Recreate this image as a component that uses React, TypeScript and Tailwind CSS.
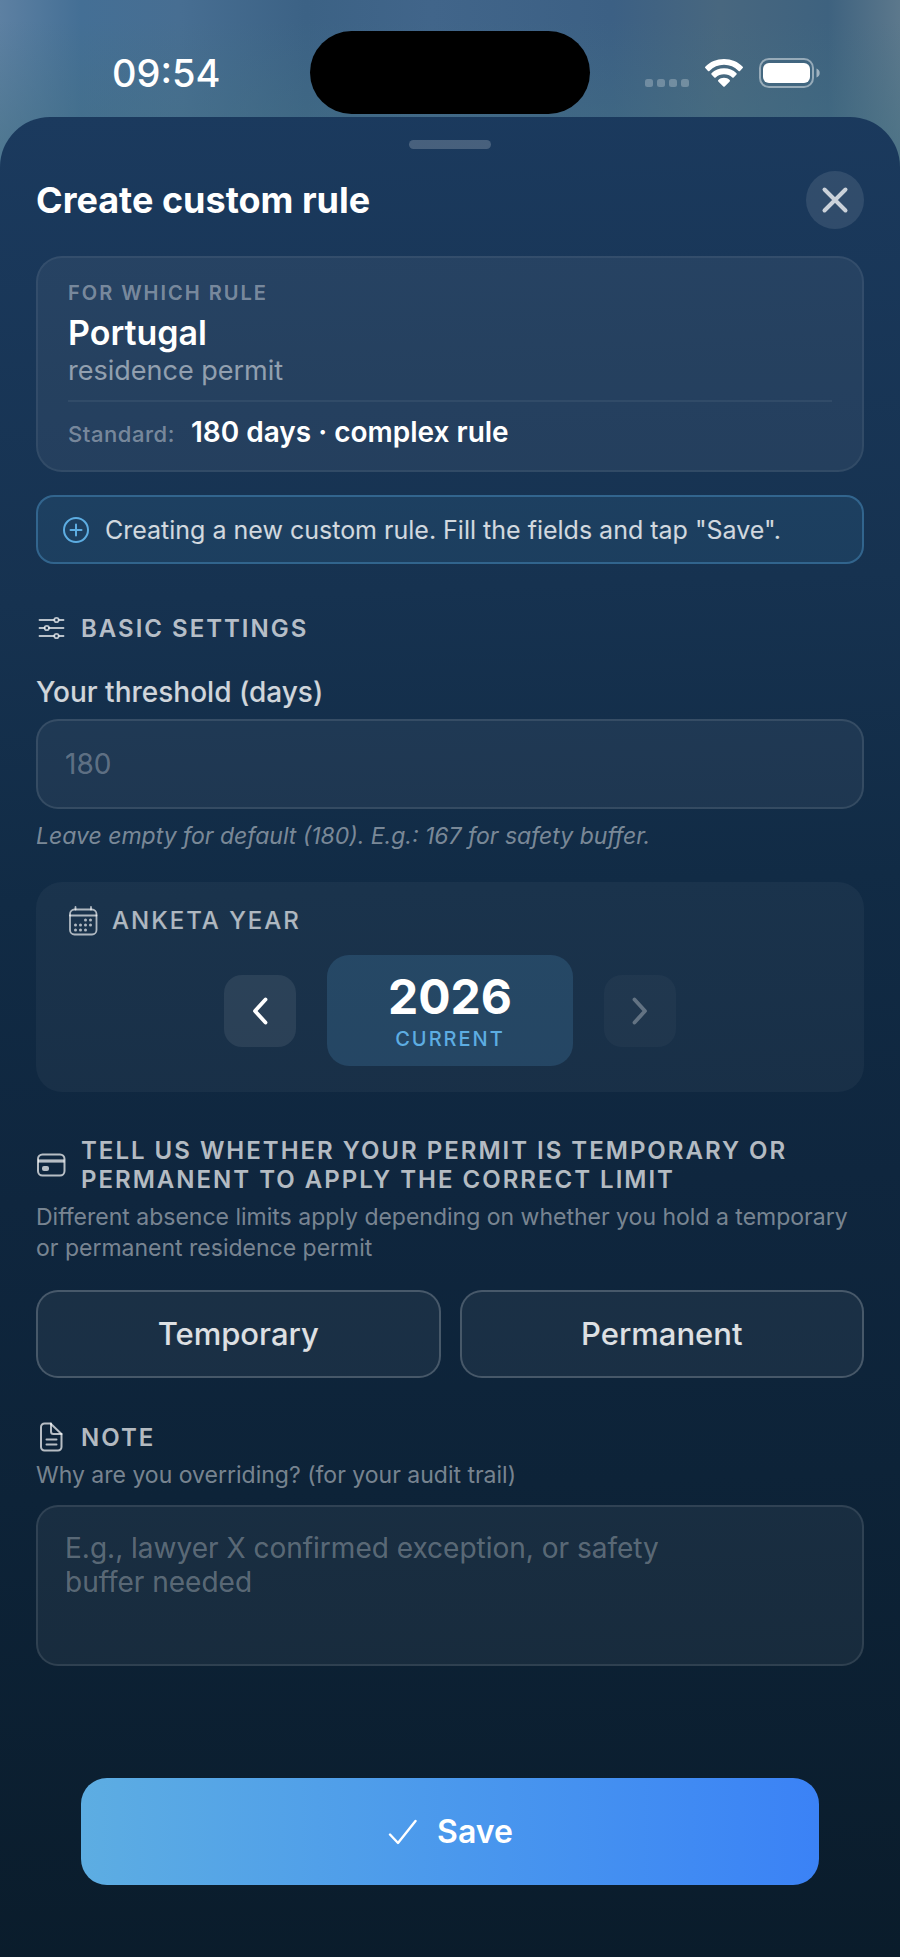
import { useState } from 'react';
import type { ReactNode } from 'react';

const StatusBar = () => (
  <header className="relative flex h-[117px] items-center justify-between pt-7 pr-20 pl-28">
    <span className="text-[38px] leading-10 font-medium">09:54</span>
    <div className="absolute top-[31px] left-1/2 h-[83px] w-[280px] -translate-x-1/2 rounded-full bg-black" />
    <div className="flex items-center gap-4">
      <svg width="44" height="28" viewBox="0 0 44 28" fill="#fff" fillOpacity="0.25">
        <rect x="0" y="20" width="8" height="8" rx="2.5" />
        <rect x="12" y="20" width="8" height="8" rx="2.5" />
        <rect x="24" y="20" width="8" height="8" rx="2.5" />
        <rect x="36" y="20" width="8" height="8" rx="2.5" />
      </svg>
      <svg width="38" height="28" viewBox="0 0 38 28" fill="#fff">
        <path d="M19 0C26.4 0 33 2.8 37.7 7.7c.4.4.4 1 0 1.400l-2.700 2.800c-.4.4-1 .4-1.400 0C29.700 8 24.700 5.800 19 5.800S8.300 8 4.400 11.900c-.4.4-1 .4-1.400 0L.3 9.100c-.4-.4-.4-1 0-1.400C5 2.800 11.600 0 19 0z" />
        <path d="M19 9.300c4.800 0 9.200 1.800 12.500 4.900.4.4.4 1 0 1.400l-2.800 2.800c-.4.4-1 .4-1.400 0-2.200-2-5.100-3.200-8.300-3.200s-6.100 1.200-8.300 3.200c-.4.4-1 .4-1.400 0l-2.800-2.800c-.4-.4-.4-1 0-1.400C9.800 11.100 14.200 9.300 19 9.300z" />
        <path d="M19 18.800c2.200 0 4.200.8 5.700 2.200.4.4.4 1 0 1.400l-5 5c-.4.4-1 .4-1.400 0l-5-5c-.4-.4-.4-1 0-1.400 1.500-1.400 3.500-2.200 5.700-2.200z" />
      </svg>
      <svg width="61" height="30" viewBox="0 0 61 30">
        <rect x="1" y="1" width="53" height="28" rx="9" fill="none" stroke="#fff" strokeOpacity="0.45" strokeWidth="2" />
        <rect x="4" y="5" width="47" height="20" rx="6" fill="#fff" />
        <path d="M57.500 10.500c2 .8 3.200 2.500 3.200 4.500s-1.200 3.700-3.200 4.500z" fill="#fff" fillOpacity="0.5" />
      </svg>
    </div>
  </header>
);

const SlidersIcon = () => (
  <svg width="30" height="30" viewBox="0 0 30 30" fill="none" stroke="currentColor" strokeWidth="1.800" strokeLinecap="round" className="shrink-0">
    <path d="M3.500 7h14.500M23 7h4.500M3.500 15h5M13 15h14.500M3.500 23h14.500M23 23h4.500" />
    <circle cx="20.500" cy="7" r="2.200" />
    <circle cx="10.800" cy="15" r="2.200" />
    <circle cx="20.500" cy="23" r="2.200" />
  </svg>
);

const CardIcon = () => (
  <svg width="30" height="30" viewBox="0 0 30 30" fill="none" stroke="currentColor" strokeWidth="2" className="shrink-0">
    <rect x="2" y="4.500" width="26.500" height="21" rx="4.500" />
    <path d="M2 11h26.500" strokeWidth="3.200" />
    <rect x="6" y="16" width="7" height="5" rx="2" fill="currentColor" stroke="none" />
  </svg>
);

const FileIcon = () => (
  <svg width="30" height="30" viewBox="0 0 30 30" fill="none" stroke="currentColor" strokeWidth="2" strokeLinecap="round" strokeLinejoin="round" className="shrink-0">
    <path d="M14.500 1.500H8.500a3.500 3.500 0 0 0-3.500 3.500v20A3.500 3.500 0 0 0 8.500 28.500h13.500a3.500 3.500 0 0 0 3.500-3.500V12z" />
    <path d="M15 1.500v8A2.500 2.500 0 0 0 17.500 12h8M10.500 17.500h10M10.500 22.500h10" />
  </svg>
);

const CalendarIcon = () => (
  <svg width="30" height="30" viewBox="0 0 30 30" fill="none" stroke="currentColor" strokeWidth="1.800" strokeLinecap="round" className="shrink-0">
    <rect x="2" y="3.500" width="26.500" height="25" rx="4.500" />
    <path d="M2 9.500h26.500M7.500 1v2.500M23 1v2.500" />
    <g fill="currentColor" stroke="none">
      <circle cx="17.500" cy="14" r="1.500" />
      <circle cx="22.500" cy="14" r="1.500" />
      <circle cx="7.500" cy="19" r="1.500" />
      <circle cx="12.500" cy="19" r="1.500" />
      <circle cx="17.500" cy="19" r="1.500" />
      <circle cx="22.500" cy="19" r="1.500" />
      <circle cx="7.500" cy="24" r="1.500" />
      <circle cx="12.500" cy="24" r="1.500" />
      <circle cx="17.500" cy="24" r="1.500" />
    </g>
  </svg>
);

const SectionTitle = ({ icon, children }: { icon: ReactNode; children: ReactNode }) => (
  <h2 className="flex items-center gap-[15px] text-[24px] leading-[29px] font-semibold tracking-[2px] text-white/70">
    {icon}
    <span>{children}</span>
  </h2>
);

export default function App() {
  const [year, setYear] = useState(2026);
  const [threshold, setThreshold] = useState('');
  const [note, setNote] = useState('');
  const [permit, setPermit] = useState('');
  const permitTypes = ['Temporary', 'Permanent'];

  return (
    <div className="flex min-h-screen flex-col bg-[linear-gradient(180deg,#43708200_20px,#43708288_150px),linear-gradient(90deg,#5d80a2_0%,#446f95_9%,#476e92_20%,#3c6285_34%,#41658a_48%,#3c6084_68%,#48677f_80%,#3e627f_92%,#5c788c_100%)] font-['Inter','Liberation_Sans',sans-serif] text-white">
      <StatusBar />
      <main className="flex-1 rounded-t-[50px] bg-[linear-gradient(178deg,#1b3a5e_0%,#163250_26%,#112b45_42%,#0f263e_58%,#0d2338_74%,#0a1c2b_100%)] px-9 pt-[23px] pb-[72px]">
        <div className="mx-auto h-[9px] w-[82px] rounded-full bg-white/20" />

        <div className="mt-[22px] flex items-center justify-between">
          <h1 className="text-[36px] leading-10 font-bold">Create custom rule</h1>
          <button
            type="button"
            aria-label="Close"
            className="flex size-[58px] items-center justify-center rounded-full bg-white/10 text-white/75"
          >
            <svg width="28" height="28" viewBox="0 0 28 28" fill="none" stroke="currentColor" strokeWidth="4" strokeLinecap="round">
              <path d="M3.500 3.500l21 21M24.500 3.500l-21 21" />
            </svg>
          </button>
        </div>

        <section className="mt-[27px] rounded-[26px] border-2 border-white/6 bg-white/6 px-[30px] pt-[23px] pb-[18px]">
          <p className="text-[20px] leading-6 font-semibold tracking-[2px] text-white/40">FOR WHICH RULE</p>
          <p className="mt-2 text-[34px] leading-10 font-semibold">Portugal</p>
          <p className="text-[27px] leading-9 text-white/50">residence permit</p>
          <div className="mt-[11px] flex items-baseline gap-4 border-t-2 border-white/6 pt-3">
            <span className="text-[22px] leading-9 font-medium tracking-wide text-white/40">Standard:</span>
            <span className="text-[28px] leading-9 font-semibold">180 days · complex rule</span>
          </div>
        </section>

        <div className="mt-[23px] flex h-[69px] items-center gap-4 rounded-[18px] border-2 border-[#5dade2]/35 bg-[#5dade2]/10 px-[25px]">
          <svg width="26" height="26" viewBox="0 0 26 26" fill="none" stroke="#5dade2" strokeWidth="2" strokeLinecap="round" className="shrink-0">
            <circle cx="13" cy="13" r="12" />
            <path d="M13 7.500v11M7.500 13h11" />
          </svg>
          <p className="text-[25px] leading-8 text-white/80">Creating a new custom rule. Fill the fields and tap "Save".</p>
        </div>

        <section className="mt-[49px]">
          <SectionTitle icon={<SlidersIcon />}>BASIC SETTINGS</SectionTitle>
          <label htmlFor="threshold" className="mt-[33px] block text-[28px] leading-8 font-medium text-white/80">
            Your threshold (days)
          </label>
          <input
            id="threshold"
            inputMode="numeric"
            placeholder="180"
            value={threshold}
            onChange={(e) => setThreshold(e.target.value)}
            className="mt-[11px] h-[90px] w-full rounded-[22px] border-2 border-white/10 bg-white/5 px-[27px] text-[28px] outline-none placeholder:text-white/30"
          />
          <p className="mt-[11px] text-[23px] leading-8 text-white/45 italic">
            Leave empty for default (180). E.g.: 167 for safety buffer.
          </p>
        </section>

        <section className="mt-[30px] rounded-[26px] bg-white/4 px-8 pt-6 pb-[26px]">
          <h2 className="flex items-center gap-[14px] text-[24px] leading-[30px] font-medium tracking-[2px] text-white/65">
            <CalendarIcon />
            ANKETA YEAR
          </h2>
          <div className="mt-[19px] flex items-center justify-center gap-[31px]">
            <button
              type="button"
              aria-label="Previous year"
              onClick={() => setYear(year - 1)}
              className="flex size-[72px] items-center justify-center rounded-[18px] bg-white/8"
            >
              <svg width="16" height="28" viewBox="0 0 16 28" fill="none" stroke="currentColor" strokeWidth="3.800" strokeLinecap="round" strokeLinejoin="round">
                <path d="M13.500 2.500L3 14l10.500 11.500" />
              </svg>
            </button>
            <div className="flex h-[111px] w-[246px] flex-col items-center rounded-[22px] bg-[#5dade2]/18 pt-4">
              <span className="text-[48px] leading-[52px] font-bold">{year}</span>
              {year === 2026 && (
                <span className="mt-1 text-[20px] leading-6 font-medium tracking-[2px] text-[#5dade2]">CURRENT</span>
              )}
            </div>
            <button
              type="button"
              aria-label="Next year"
              disabled={year >= 2026}
              onClick={() => setYear(year + 1)}
              className="flex size-[72px] items-center justify-center rounded-[18px] bg-white/8 disabled:bg-white/3 disabled:text-white/30"
            >
              <svg width="16" height="28" viewBox="0 0 16 28" fill="none" stroke="currentColor" strokeWidth="3.800" strokeLinecap="round" strokeLinejoin="round">
                <path d="M2.500 2.500L13 14 2.500 25.500" />
              </svg>
            </button>
          </div>
        </section>

        <section className="mt-11">
          <SectionTitle icon={<CardIcon />}>
            TELL US WHETHER YOUR PERMIT IS TEMPORARY OR PERMANENT TO APPLY THE CORRECT LIMIT
          </SectionTitle>
          <p className="mt-2 text-[23px] leading-[31px] text-white/45">
            Different absence limits apply depending on whether you hold a temporary or permanent residence permit
          </p>
          <div className="mt-[26px] grid grid-cols-2 gap-[19px]">
            {permitTypes.map((type) => (
              <button
                key={type}
                type="button"
                aria-pressed={permit === type}
                onClick={() => setPermit(type)}
                className="h-[88px] rounded-[22px] border-2 border-white/20 bg-white/5 text-[31px] font-medium text-white/85 aria-pressed:border-[#5dade2]"
              >
                {type}
              </button>
            ))}
          </div>
        </section>

        <section className="mt-11">
          <SectionTitle icon={<FileIcon />}>NOTE</SectionTitle>
          <label htmlFor="note" className="mt-2 block text-[23px] leading-[31px] text-white/45">
            Why are you overriding? (for your audit trail)
          </label>
          <textarea
            id="note"
            placeholder="E.g., lawyer X confirmed exception, or safety buffer needed"
            value={note}
            onChange={(e) => setNote(e.target.value)}
            className="mt-3.5 block h-[161px] w-full resize-none rounded-[22px] border-2 border-white/10 bg-white/5 py-6 pr-32 pl-[27px] text-[28px] leading-[34px] outline-none placeholder:text-white/30"
          />
        </section>

        <div className="mt-28 px-[45px]">
          <button
            type="button"
            className="flex h-[107px] w-full items-center justify-center gap-5 rounded-[26px] bg-linear-to-r from-[#5dade2] to-[#3b82f6] text-[32px] font-semibold"
          >
            <svg width="30" height="26" viewBox="0 0 30 26" fill="none" stroke="currentColor" strokeWidth="2.400" strokeLinecap="round" strokeLinejoin="round">
              <path d="M3 15.500L11 24 28.500 2" />
            </svg>
            Save
          </button>
        </div>
      </main>
    </div>
  );
}
